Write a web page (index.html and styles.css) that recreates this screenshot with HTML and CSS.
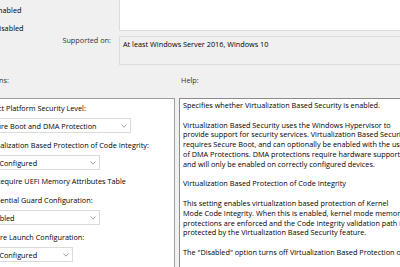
FILE: index.html
```html
<!DOCTYPE html>
<html lang="en">
<head>
  <meta charset="UTF-8">
  <title>Turn On Virtualization Based Security</title>
  <link rel="stylesheet" href="styles.css">
</head>
<body>
  <div class="dialog">
    <div class="top">
      <div class="states">
        <label class="radio"><span class="dot"></span>Enabled</label>
        <label class="radio"><span class="dot"></span>Disabled</label>
      </div>
      <div class="comment"></div>
      <div class="supported-label">Supported on:</div>
      <div class="supported">At least Windows Server 2016, Windows 10</div>
    </div>

    <div class="captions">
      <div class="caption caption-options">Options:</div>
      <div class="caption">Help:</div>
    </div>

    <div class="panes">
      <div class="options">
        <div class="field-label">Select Platform Security Level:</div>
        <div class="combo combo-wide">
          <span>Secure Boot and DMA Protection</span>
          <svg width="6" height="4" viewBox="0 0 6 4"><path d="M0.5 0.5 L3 3.2 L5.5 0.5" fill="none" stroke="#8a8a8a" stroke-width="0.8"/></svg>
        </div>
        <div class="field-label">Virtualization Based Protection of Code Integrity:</div>
        <div class="combo combo-mid">
          <span>Not Configured</span>
          <svg width="6" height="4" viewBox="0 0 6 4"><path d="M0.5 0.5 L3 3.2 L5.5 0.5" fill="none" stroke="#8a8a8a" stroke-width="0.8"/></svg>
        </div>
        <label class="check"><span class="box"></span>Require UEFI Memory Attributes Table</label>
        <div class="field-label">Credential Guard Configuration:</div>
        <div class="combo combo-mid">
          <span>Disabled</span>
          <svg width="6" height="4" viewBox="0 0 6 4"><path d="M0.5 0.5 L3 3.2 L5.5 0.5" fill="none" stroke="#8a8a8a" stroke-width="0.8"/></svg>
        </div>
        <div class="field-label">Secure Launch Configuration:</div>
        <div class="combo combo-small">
          <span>Not Configured</span>
          <svg width="6" height="4" viewBox="0 0 6 4"><path d="M0.5 0.5 L3 3.2 L5.5 0.5" fill="none" stroke="#8a8a8a" stroke-width="0.8"/></svg>
        </div>
      </div>

      <div class="help">
        <p>Specifies whether Virtualization Based Security is enabled.</p>
        <p>Virtualization Based Security uses the Windows Hypervisor to<br>
        provide support for security services. Virtualization Based Security<br>
        requires Secure Boot, and can optionally be enabled with the use<br>
        of DMA Protections. DMA protections require hardware support<br>
        and will only be enabled on correctly configured devices.</p>
        <p>Virtualization Based Protection of Code Integrity</p>
        <p>This setting enables virtualization based protection of Kernel<br>
        Mode Code Integrity. When this is enabled, kernel mode memory<br>
        protections are enforced and the Code Integrity validation path is<br>
        protected by the Virtualization Based Security feature.</p>
        <p>The "Disabled" option turns off Virtualization Based Protection of</p>
      </div>
    </div>
  </div>
</body>
</html>
```

FILE: styles.css
```css
html,body{margin:0;padding:0;}
body{background:#f0f0f0;overflow:hidden;width:400px;height:267px;font-family:"Open Sans",sans-serif;font-size:7.3px;color:#000;}

.dialog{margin-left:-20px;width:560px;}

/* state + comment + supported on */
.top{display:grid;grid-template-columns:139px 1fr;grid-template-rows:31px 29px;row-gap:5px;}
.states{grid-column:1;grid-row:1;display:flex;flex-direction:column;gap:8px;padding:5px 0 0 2px;}
.radio{display:flex;align-items:center;gap:3px;line-height:10px;}
.dot{width:9px;height:9px;box-sizing:border-box;border:1px solid #333;border-radius:50%;background:#fff;}
.comment{grid-column:2;grid-row:1;background:#fff;border:1px solid #dcdcdc;border-top:none;}
.supported-label{grid-column:1;grid-row:2;text-align:right;padding-right:8px;line-height:10px;margin-top:-1px;color:#333;}
.supported{grid-column:2;grid-row:2;border:1px solid #dcdcdc;padding:2px 3px;line-height:10px;}

/* captions */
.captions{display:flex;margin-top:10px;line-height:10px;color:#333;}
.caption-options{width:201px;}

/* panes */
.panes{display:flex;gap:4px;margin-top:13px;height:200px;}
.options{width:195px;box-sizing:border-box;border:1px solid #a0a0a0;background:#fff;padding:4px 0 0 3px;display:flex;flex-direction:column;align-items:flex-start;}
.field-label{line-height:10px;margin-bottom:5px;white-space:nowrap;}
.combo{height:15px;box-sizing:border-box;margin:0 0 7px -2px;border:1px solid #dadada;background:#fff;display:flex;align-items:center;justify-content:space-between;padding:0 3px 0 2px;white-space:nowrap;}
.combo svg{display:block;}
.combo-wide{width:149px;}
.combo-mid{width:118px;}
.combo-small{width:91px;}
.check{display:flex;align-items:center;gap:3px;line-height:10px;margin:-1px 0 9px 0;white-space:nowrap;}
.box{width:9px;height:9px;box-sizing:border-box;border:1px solid #333;background:#fff;}

.help{flex:1;border:1px solid #8c8c8c;background:#fff;padding:2px 0 0 3px;line-height:9.8px;white-space:nowrap;overflow:hidden;}
.help p{margin:0 0 9.8px 0;}
```
